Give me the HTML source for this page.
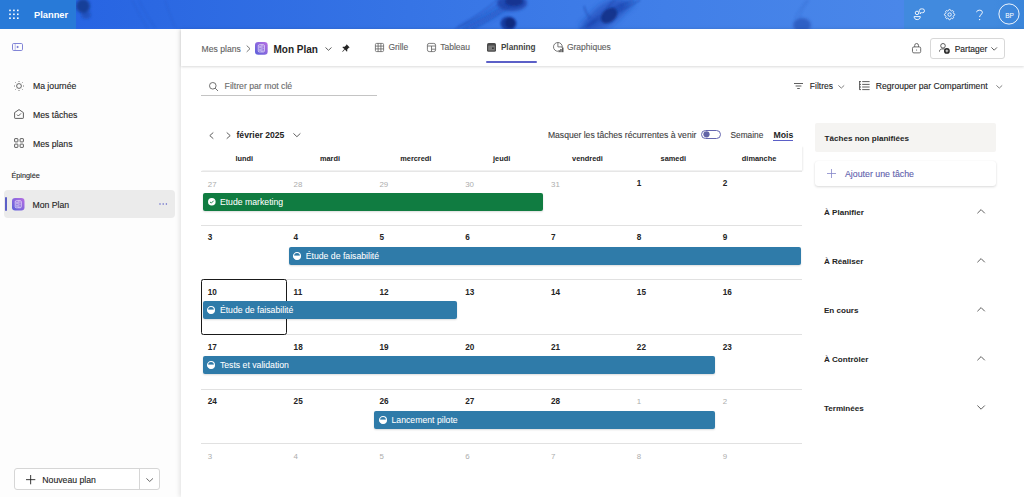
<!DOCTYPE html>
<html><head><meta charset="utf-8"><title>Planner</title>
<style>
html,body{margin:0;padding:0;width:1024px;height:497px;overflow:hidden;background:#fff;}
body{position:relative;font-family:"Liberation Sans", sans-serif;}
.t{position:absolute;white-space:nowrap;font-family:"Liberation Sans", sans-serif;}
svg{display:block}
</style></head><body>
<div style="position:absolute;left:0.00px;top:0.00px;width:1024.00px;height:29.00px;background:linear-gradient(90deg,#2461e4 0%,#2b68e2 15%,#3674e5 40%,#417fe8 65%,#4a87e9 88%,#4d89e6 100%)"></div>
<svg style="position:absolute;left:0.00px;top:0.00px;overflow:visible" width="1024" height="29" viewBox="0 0 1024 29">
<defs>
<filter id="b3" x="-100%" y="-100%" width="300%" height="300%"><feGaussianBlur stdDeviation="3"/></filter>
<filter id="b2" x="-100%" y="-100%" width="300%" height="300%"><feGaussianBlur stdDeviation="1.8"/></filter>
<filter id="b1" x="-100%" y="-100%" width="300%" height="300%"><feGaussianBlur stdDeviation="1"/></filter>
<filter id="b05" x="-100%" y="-100%" width="300%" height="300%"><feGaussianBlur stdDeviation="0.8"/></filter>
</defs>
<g filter="url(#b2)">
<ellipse cx="83" cy="6" rx="7" ry="7" fill="#10307f" opacity="0.75"/>
<ellipse cx="86" cy="15" rx="5" ry="4" fill="#163a95" opacity="0.45"/>
</g>
<g filter="url(#b05)" stroke="#2250b8" stroke-width="0.7" fill="none" opacity="0.45">
<path d="M132 0 C136 9 142 19 148 29"/><path d="M139 0 C143 10 150 20 156 29"/><path d="M165 0 C168 10 172 20 176 29"/>
</g>
<!-- jellyfish 1 -->
<g filter="url(#b3)"><path d="M507 4 C495 12 478 20 458 29 L470 29 C486 22 500 14 512 6Z" fill="#1b43aa" opacity="0.45"/></g>
<g filter="url(#b2)"><ellipse cx="512" cy="3" rx="15" ry="8" fill="#173ea3" opacity="0.75"/></g>
<g filter="url(#b1)"><ellipse cx="514" cy="1.5" rx="9" ry="4.5" fill="#0c2a82" opacity="0.7"/>
<ellipse cx="508.5" cy="23.5" rx="8" ry="7" fill="#123495" opacity="0.85"/>
<ellipse cx="510" cy="23" rx="5" ry="5" fill="#0a2270" opacity="0.7"/></g>
<g filter="url(#b05)" stroke="#1a3ea6" stroke-width="1" fill="none" opacity="0.6">
<path d="M502 2 C490 11 475 20 455 29"/><path d="M505 5 C494 13 480 21 463 29"/><path d="M509 6 C498 14 486 22 472 29"/><path d="M497 0 C488 8 474 18 458 27"/>
</g>
<!-- smoke 2 -->
<g filter="url(#b3)"><ellipse cx="606" cy="15" rx="24" ry="11" transform="rotate(-35 606 15)" fill="#1c45b0" opacity="0.6"/><ellipse cx="625" cy="6" rx="10" ry="5" transform="rotate(-30 625 6)" fill="#1c45b0" opacity="0.5"/><ellipse cx="588" cy="24" rx="9" ry="5" transform="rotate(-30 588 24)" fill="#1c45b0" opacity="0.45"/></g>
<g filter="url(#b1)"><ellipse cx="609" cy="15.5" rx="9.5" ry="6.5" transform="rotate(-40 609 15.5)" fill="#0d2a80" opacity="0.8"/></g>
<g filter="url(#b05)" stroke="#163ba2" stroke-width="1.1" fill="none" opacity="0.6">
<path d="M612 10 C620 6 626 3 634 0"/><path d="M616 12 C624 9 632 5 640 0"/><path d="M607 9 C609 5 612 2 615 0"/>
<path d="M603 18 C595 22 588 25 580 29"/><path d="M600 16 C594 20 590 24 586 29"/><path d="M584 6 C585 10 586 14 590 18"/>
</g>
<!-- 3 -->
<g filter="url(#b2)"><ellipse cx="802" cy="25" rx="9" ry="7" fill="#1c47ad" opacity="0.6"/></g>
<g filter="url(#b05)" stroke="#2452b8" stroke-width="0.7" fill="none" opacity="0.5">
<path d="M795 18 C798 12 802 6 807 0"/><path d="M799 18 C801 12 804 6 809 0"/>
</g>
</svg>
<div style="position:absolute;left:0.00px;top:0.00px;width:76.00px;height:29.00px;background:#287ad8"></div>
<div style="position:absolute;left:904.00px;top:0.00px;width:120.00px;height:29.00px;background:linear-gradient(90deg,#418ade 0%,#418ade 75%,#3a85da 100%)"></div>
<svg style="position:absolute;left:0.00px;top:0.00px;overflow:visible" width="30" height="29" viewBox="0 0 30 29"><rect x="9.2" y="9.6" width="1.6" height="1.6" fill="#fff"/><rect x="9.2" y="13.5" width="1.6" height="1.6" fill="#fff"/><rect x="9.2" y="17.4" width="1.6" height="1.6" fill="#fff"/><rect x="13.1" y="9.6" width="1.6" height="1.6" fill="#fff"/><rect x="13.1" y="13.5" width="1.6" height="1.6" fill="#fff"/><rect x="13.1" y="17.4" width="1.6" height="1.6" fill="#fff"/><rect x="17.0" y="9.6" width="1.6" height="1.6" fill="#fff"/><rect x="17.0" y="13.5" width="1.6" height="1.6" fill="#fff"/><rect x="17.0" y="17.4" width="1.6" height="1.6" fill="#fff"/></svg>
<div class="t" style="left:34.00px;top:9.80px;font-size:9.3px;line-height:11.16px;font-weight:700;color:#ffffff;">Planner</div>
<svg style="position:absolute;left:913.00px;top:8.00px;overflow:visible" width="12" height="12" viewBox="0 0 12 12"><g fill="none" stroke="#fff" stroke-width="0.9"><circle cx="4" cy="4.9" r="1.75"/><path d="M1.1 8.6 H7.3 C7.3 10.5 5.9 11.6 4.2 11.6 C2.5 11.6 1.1 10.5 1.1 8.6Z"/><path d="M8.2 0.9 H9.6 A1.9 1.9 0 0 1 9.6 4.7 H8.4 L7.1 5.8 L7.3 4.5 A1.9 1.9 0 0 1 8.2 0.9Z" stroke-linejoin="round"/></g></svg>
<svg style="position:absolute;left:943.80px;top:8.60px;overflow:visible" width="11.2" height="11.2" viewBox="0 0 11.2 11.2"><g fill="none" stroke="#fff" stroke-width="0.9"><path d="M10.74 5.60 L10.72 5.94 L10.62 6.26 L10.11 6.50 L9.59 6.67 L9.45 6.91 L9.35 7.15 L9.25 7.40 L9.18 7.67 L9.42 8.16 L9.62 8.68 L9.46 8.99 L9.24 9.24 L8.99 9.46 L8.68 9.62 L8.16 9.42 L7.67 9.18 L7.40 9.25 L7.15 9.35 L6.91 9.45 L6.67 9.59 L6.50 10.11 L6.26 10.62 L5.94 10.72 L5.60 10.74 L5.26 10.72 L4.94 10.62 L4.70 10.11 L4.53 9.59 L4.29 9.45 L4.05 9.35 L3.80 9.25 L3.53 9.18 L3.04 9.42 L2.52 9.62 L2.21 9.46 L1.96 9.24 L1.74 8.99 L1.58 8.68 L1.78 8.16 L2.02 7.67 L1.95 7.40 L1.85 7.15 L1.75 6.91 L1.61 6.67 L1.09 6.50 L0.58 6.26 L0.48 5.94 L0.46 5.60 L0.48 5.26 L0.58 4.94 L1.09 4.70 L1.61 4.53 L1.75 4.29 L1.85 4.05 L1.95 3.80 L2.02 3.53 L1.78 3.04 L1.58 2.52 L1.74 2.21 L1.96 1.96 L2.21 1.74 L2.52 1.58 L3.04 1.78 L3.53 2.02 L3.80 1.95 L4.05 1.85 L4.29 1.75 L4.53 1.61 L4.70 1.09 L4.94 0.58 L5.26 0.48 L5.60 0.46 L5.94 0.48 L6.26 0.58 L6.50 1.09 L6.67 1.61 L6.91 1.75 L7.15 1.85 L7.40 1.95 L7.67 2.02 L8.16 1.78 L8.68 1.58 L8.99 1.74 L9.24 1.96 L9.46 2.21 L9.62 2.52 L9.42 3.04 L9.18 3.53 L9.25 3.80 L9.35 4.05 L9.45 4.29 L9.59 4.53 L10.11 4.70 L10.62 4.94 L10.72 5.26 L10.74 5.60Z"/><circle cx="5.6" cy="5.6" r="1.7"/></g></svg>
<svg style="position:absolute;left:975.00px;top:8.60px;overflow:visible" width="9" height="12" viewBox="0 0 9 12"><g fill="none" stroke="#fff" stroke-width="0.95"><path d="M1.6 3.2 C1.6 0.6 7.4 0.4 7.4 3.4 C7.4 5.6 4.6 5.6 4.6 8"/></g><circle cx="4.6" cy="10.6" r="0.7" fill="#fff"/></svg>
<svg style="position:absolute;left:998.40px;top:3.40px;overflow:visible" width="22" height="22" viewBox="0 0 22 22"><circle cx="11" cy="11" r="10.1" fill="none" stroke="#fff" stroke-width="0.9"/></svg>
<div class="t" style="left:949.60px;width:120px;text-align:center;top:11.85px;font-size:6.6px;line-height:7.92px;font-weight:400;color:#ffffff;-webkit-text-stroke:0;">BP</div>
<div style="position:absolute;left:0.00px;top:29.00px;width:181.00px;height:468.00px;background:#fdfdfd"></div>
<svg style="position:absolute;left:12.00px;top:43.00px;overflow:visible" width="11" height="8" viewBox="0 0 11 8"><rect x="0.5" y="0.5" width="10" height="7" rx="1.2" fill="none" stroke="#7477d2" stroke-width="0.9"/><line x1="3.2" y1="1" x2="3.2" y2="7" stroke="#7477d2" stroke-width="0.8" opacity="0.6"/><path d="M5 2.8 L7.2 4 L5 5.2Z" fill="#7477d2"/><line x1="4" y1="4" x2="5.4" y2="4" stroke="#7477d2" stroke-width="0.7" opacity="0.6"/></svg>
<svg style="position:absolute;left:14.00px;top:80.50px;overflow:visible" width="10" height="10" viewBox="0 0 10 10"><g stroke="#424242" stroke-width="0.8" fill="none"><circle cx="5" cy="5" r="2.4"/><path d="M5 0.1v0.9M5 9v0.9M0.1 5h0.9M9 5h0.9M1.5 1.5l0.6 0.6M7.9 7.9l0.6 0.6M1.5 8.5l0.6-0.6M7.9 2.1l0.6-0.6"/></g></svg>
<div class="t" style="left:32.90px;top:80.87px;font-size:8.7px;line-height:10.44px;font-weight:400;color:#242424;-webkit-text-stroke:0.12px #242424;">Ma journée</div>
<svg style="position:absolute;left:14.00px;top:109.00px;overflow:visible" width="10" height="10" viewBox="0 0 10 10"><g stroke="#424242" stroke-width="0.85" fill="none" stroke-linejoin="round"><path d="M0.6 3.6 L5 0.6 L9.4 3.6 V8.8 Q9.4 9.4 8.8 9.4 H1.2 Q0.6 9.4 0.6 8.8Z"/><path d="M3 5.6 L4.4 7 L7 4.4"/></g></svg>
<div class="t" style="left:32.90px;top:109.57px;font-size:8.7px;line-height:10.44px;font-weight:400;color:#242424;-webkit-text-stroke:0.12px #242424;">Mes tâches</div>
<svg style="position:absolute;left:14.00px;top:138.00px;overflow:visible" width="10" height="10" viewBox="0 0 10 10"><g stroke="#424242" stroke-width="0.85" fill="none"><rect x="0.6" y="0.6" width="3.3" height="3.3" rx="0.5"/><rect x="6.1" y="0.6" width="3.3" height="3.3" rx="0.5"/><rect x="0.6" y="6.1" width="3.3" height="3.3" rx="0.5"/><rect x="6.1" y="6.1" width="3.3" height="3.3" rx="0.5"/></g></svg>
<div class="t" style="left:32.90px;top:138.57px;font-size:8.7px;line-height:10.44px;font-weight:400;color:#242424;-webkit-text-stroke:0.12px #242424;">Mes plans</div>
<div class="t" style="left:11.40px;top:171.89px;font-size:7.3px;line-height:8.76px;font-weight:400;color:#2a2a2a;-webkit-text-stroke:0.12px #2a2a2a;">Épinglée</div>
<div style="position:absolute;left:3.90px;top:190.20px;width:171.50px;height:27.40px;background:#ebebeb;border-radius:4px"></div>
<div style="position:absolute;left:4.90px;top:196.90px;width:2.10px;height:13.70px;background:#5b5fc7;border-radius:1px"></div>
<svg style="position:absolute;left:12.30px;top:197.80px;overflow:visible" width="12.5" height="12.5" viewBox="0 0 12.5 12.5"><defs><linearGradient id="pg12" x1="1" y1="0" x2="0" y2="1"><stop offset="0" stop-color="#b86fe2"/><stop offset="1" stop-color="#5a60da"/></linearGradient></defs>
<rect x="0" y="0" width="12.5" height="12.5" rx="3.2" fill="url(#pg12)"/>
<g transform="scale(1.0417)"><rect x="3.1" y="2.6" width="5.8" height="6.8" rx="1" fill="none" stroke="#fff" stroke-width="0.8" opacity="0.75"/>
<line x1="6.6" y1="2.6" x2="6.6" y2="9.4" stroke="#fff" stroke-width="0.7" opacity="0.75"/>
<rect x="3.9" y="3.6" width="2.1" height="2.2" fill="#fff" opacity="0.45"/><rect x="3.9" y="6.3" width="2.1" height="2.2" fill="#fff" opacity="0.45"/>
<circle cx="7.7" cy="4.6" r="0.45" fill="#fff" opacity="0.7"/><circle cx="7.7" cy="6.2" r="0.45" fill="#fff" opacity="0.7"/><circle cx="7.7" cy="7.8" r="0.45" fill="#fff" opacity="0.7"/></g></svg>
<div class="t" style="left:32.50px;top:199.57px;font-size:8.7px;line-height:10.44px;font-weight:400;color:#242424;-webkit-text-stroke:0.12px #242424;">Mon Plan</div>
<svg style="position:absolute;left:158.50px;top:203.00px;overflow:visible" width="9" height="2" viewBox="0 0 9 2"><circle cx="1" cy="1" r="0.75" fill="#5b5fc7"/><circle cx="4.2" cy="1" r="0.75" fill="#5b5fc7"/><circle cx="7.4" cy="1" r="0.75" fill="#5b5fc7"/></svg>
<div style="position:absolute;left:14.30px;top:468.40px;width:145.30px;height:21.80px;box-sizing:border-box;border:1px solid #d6d6d6;border-radius:3px;background:#fff"></div>
<div style="position:absolute;left:139.30px;top:468.90px;width:1.00px;height:20.80px;background:#d6d6d6"></div>
<svg style="position:absolute;left:26.00px;top:475.40px;overflow:visible" width="9.3" height="9.3" viewBox="0 0 9.3 9.3"><path d="M4.65 0 V9.3 M0 4.65 H9.3" stroke="#242424" stroke-width="0.9"/></svg>
<div class="t" style="left:42.30px;top:474.97px;font-size:8.7px;line-height:10.44px;font-weight:400;color:#242424;-webkit-text-stroke:0.12px #242424;">Nouveau plan</div>
<svg style="position:absolute;left:145.60px;top:477.50px;overflow:visible" width="7.4" height="4" viewBox="0 0 7.4 4"><path d="M0.4 0.4 L3.7 3.5 L7 0.4" fill="none" stroke="#424242" stroke-width="0.8"/></svg>
<div style="position:absolute;left:181.00px;top:29.00px;width:843.00px;height:468.00px;background:#ffffff;box-shadow:-2px 0 4px rgba(0,0,0,0.09)"></div>
<div style="position:absolute;left:181.00px;top:29.00px;width:843.00px;height:37.00px;background:#fff;box-shadow:0 1.2px 2.5px rgba(0,0,0,0.15)"></div>
<div class="t" style="left:201.60px;top:43.66px;font-size:8.6px;line-height:10.32px;font-weight:400;color:#616161;-webkit-text-stroke:0.12px #616161;">Mes plans</div>
<svg style="position:absolute;left:246.00px;top:44.60px;overflow:visible" width="5" height="7.5" viewBox="0 0 5 7.5"><path d="M0.7 0.6 L4 3.7 L0.7 6.9" fill="none" stroke="#616161" stroke-width="0.85"/></svg>
<svg style="position:absolute;left:255.20px;top:42.00px;overflow:visible" width="12.7" height="12.7" viewBox="0 0 12.7 12.7"><defs><linearGradient id="pg255" x1="1" y1="0" x2="0" y2="1"><stop offset="0" stop-color="#b86fe2"/><stop offset="1" stop-color="#5a60da"/></linearGradient></defs>
<rect x="0" y="0" width="12.7" height="12.7" rx="3.3" fill="url(#pg255)"/>
<g transform="scale(1.0583)"><rect x="3.1" y="2.6" width="5.8" height="6.8" rx="1" fill="none" stroke="#fff" stroke-width="0.8" opacity="0.75"/>
<line x1="6.6" y1="2.6" x2="6.6" y2="9.4" stroke="#fff" stroke-width="0.7" opacity="0.75"/>
<rect x="3.9" y="3.6" width="2.1" height="2.2" fill="#fff" opacity="0.45"/><rect x="3.9" y="6.3" width="2.1" height="2.2" fill="#fff" opacity="0.45"/>
<circle cx="7.7" cy="4.6" r="0.45" fill="#fff" opacity="0.7"/><circle cx="7.7" cy="6.2" r="0.45" fill="#fff" opacity="0.7"/><circle cx="7.7" cy="7.8" r="0.45" fill="#fff" opacity="0.7"/></g></svg>
<div class="t" style="left:273.50px;top:43.94px;font-size:10px;line-height:12.00px;font-weight:700;color:#242424;">Mon Plan</div>
<svg style="position:absolute;left:325.00px;top:46.80px;overflow:visible" width="7" height="4" viewBox="0 0 7 4"><path d="M0.5 0.5 L3.5 3.3 L6.5 0.5" fill="none" stroke="#424242" stroke-width="0.85"/></svg>
<svg style="position:absolute;left:341.70px;top:44.40px;overflow:visible" width="8" height="8.2" viewBox="0 0 8 8.2"><path d="M4.6 0.3 L7.7 3.4 L6.8 3.8 L5.2 5.4 L5.3 7.2 L4.6 7.5 L2.9 5.6 L0.6 7.9 L0.3 7.6 L2.4 5.1 L0.5 3.4 L0.8 2.7 L2.6 2.8 L4.2 1.2 Z" fill="#242424"/></svg>
<svg style="position:absolute;left:375.20px;top:42.70px;overflow:visible" width="9" height="9" viewBox="0 0 9 9"><g fill="none" stroke="#616161" stroke-width="0.8"><rect x="0.4" y="0.4" width="8.2" height="8.2" rx="1.2"/><path d="M3.1 0.4V8.6M5.9 0.4V8.6M0.4 3.1H8.6M0.4 5.9H8.6"/></g></svg>
<div class="t" style="left:388.40px;top:42.25px;font-size:8.5px;line-height:10.20px;font-weight:400;color:#616161;-webkit-text-stroke:0.12px #616161;">Grille</div>
<svg style="position:absolute;left:426.50px;top:42.70px;overflow:visible" width="9" height="9" viewBox="0 0 9 9"><g fill="none" stroke="#616161" stroke-width="0.8"><rect x="0.4" y="0.4" width="8.2" height="8.2" rx="1.8"/><path d="M0.4 3H8.6M4.5 3V8.6M4.5 6.2H8.6"/></g></svg>
<div class="t" style="left:440.20px;top:42.25px;font-size:8.5px;line-height:10.20px;font-weight:400;color:#616161;-webkit-text-stroke:0.12px #616161;">Tableau</div>
<svg style="position:absolute;left:487.40px;top:42.80px;overflow:visible" width="9" height="8.8" viewBox="0 0 9 8.8"><rect x="0" y="0" width="9" height="8.8" rx="1.6" fill="#4a4a4a"/><rect x="1.2" y="2.6" width="6.6" height="5" rx="0.5" fill="#7a7a7a"/><rect x="5" y="4.4" width="1.8" height="1.6" fill="#3a3a3a"/></svg>
<div class="t" style="left:500.90px;top:42.54px;font-size:8.2px;line-height:9.84px;font-weight:700;color:#424242;">Planning</div>
<div style="position:absolute;left:485.60px;top:60.90px;width:51.40px;height:2.00px;background:#5b5fc7;border-radius:1px"></div>
<svg style="position:absolute;left:553.00px;top:42.00px;overflow:visible" width="11" height="10.5" viewBox="0 0 11 10.5"><circle cx="4.9" cy="4.9" r="4.4" fill="none" stroke="#616161" stroke-width="0.85"/><path d="M4.9 0.5V4.9H9.3" fill="none" stroke="#616161" stroke-width="0.85"/><rect x="5" y="6" width="6" height="4.5" fill="#fff"/><rect x="5.4" y="8.2" width="1.5" height="2" fill="#5a5a5a"/><rect x="7.2" y="7" width="1.5" height="3.2" fill="#5a5a5a"/><rect x="9" y="5.6" width="1.5" height="4.6" fill="#5a5a5a"/></svg>
<div class="t" style="left:566.90px;top:42.25px;font-size:8.5px;line-height:10.20px;font-weight:400;color:#616161;-webkit-text-stroke:0.12px #616161;">Graphiques</div>
<svg style="position:absolute;left:912.10px;top:43.30px;overflow:visible" width="9.2" height="10.4" viewBox="0 0 9.2 10.4"><g fill="none" stroke="#4a4a4a" stroke-width="0.8"><path d="M2.7 3.9 V2.4 A1.9 1.9 0 0 1 6.5 2.4 V3.9"/><rect x="0.5" y="3.9" width="8.2" height="6" rx="1.4"/></g><circle cx="4.6" cy="7" r="0.55" fill="#4a4a4a"/></svg>
<div style="position:absolute;left:930.30px;top:38.20px;width:74.40px;height:20.60px;box-sizing:border-box;border:1px solid #d8d8d8;border-radius:3px;background:#fff"></div>
<svg style="position:absolute;left:938.50px;top:43.00px;overflow:visible" width="10.8" height="10.8" viewBox="0 0 10.8 10.8"><g fill="none" stroke="#424242" stroke-width="0.85"><circle cx="4" cy="2.8" r="2.3"/><path d="M0.5 8.6 C0.5 6.4 2 5.9 4 5.9 C5 5.9 5.6 6 6 6.2"/></g><circle cx="7.9" cy="7.9" r="2.9" fill="#242424"/><path d="M7.9 6.4V9.4M6.4 7.9H9.4" stroke="#fff" stroke-width="0.8"/></svg>
<div class="t" style="left:954.70px;top:43.75px;font-size:8.5px;line-height:10.20px;font-weight:400;color:#242424;-webkit-text-stroke:0.12px #242424;">Partager</div>
<svg style="position:absolute;left:990.80px;top:47.30px;overflow:visible" width="6.4" height="3.8" viewBox="0 0 6.4 3.8"><path d="M0.4 0.4 L3.2 3.2 L6 0.4" fill="none" stroke="#424242" stroke-width="0.85"/></svg>
<svg style="position:absolute;left:209.10px;top:81.70px;overflow:visible" width="9.4" height="9.4" viewBox="0 0 9.4 9.4"><g fill="none" stroke="#616161" stroke-width="0.9"><circle cx="3.8" cy="3.8" r="3.3"/><path d="M6.2 6.2 L9 9"/></g></svg>
<div class="t" style="left:224.60px;top:80.87px;font-size:8.7px;line-height:10.44px;font-weight:400;color:#6b6b6b;-webkit-text-stroke:0.12px #6b6b6b;">Filtrer par mot clé</div>
<div style="position:absolute;left:201.30px;top:94.60px;width:175.80px;height:1.00px;background:#c4c4c4"></div>
<svg style="position:absolute;left:793.80px;top:83.10px;overflow:visible" width="9" height="6" viewBox="0 0 9 6"><path d="M0 0.5H9M1.6 3H7.4M3.2 5.5H5.8" stroke="#424242" stroke-width="0.85"/></svg>
<div class="t" style="left:809.80px;top:80.95px;font-size:8.5px;line-height:10.20px;font-weight:400;color:#242424;-webkit-text-stroke:0.12px #242424;">Filtres</div>
<svg style="position:absolute;left:838.40px;top:85.00px;overflow:visible" width="6.6" height="3.6" viewBox="0 0 6.6 3.6"><path d="M0.4 0.4 L3.3 3.1 L6.2 0.4" fill="none" stroke="#616161" stroke-width="0.8"/></svg>
<svg style="position:absolute;left:858.60px;top:81.40px;overflow:visible" width="11" height="9" viewBox="0 0 11 9"><g stroke="#424242" stroke-width="0.85" fill="none"><path d="M3.2 0.6H10.6M3.2 3.4H10.6M3.2 6H10.6M3.2 8.6H10.6"/><path d="M0.6 0.4V8.8M0.6 3.4H2M0.6 6H2M0.6 8.6H2M0 0.6H2"/></g></svg>
<div class="t" style="left:875.80px;top:80.86px;font-size:8.6px;line-height:10.32px;font-weight:400;color:#242424;-webkit-text-stroke:0.12px #242424;">Regrouper par Compartiment</div>
<svg style="position:absolute;left:995.60px;top:85.00px;overflow:visible" width="6.6" height="3.6" viewBox="0 0 6.6 3.6"><path d="M0.4 0.4 L3.3 3.1 L6.2 0.4" fill="none" stroke="#616161" stroke-width="0.8"/></svg>
<svg style="position:absolute;left:209.30px;top:131.80px;overflow:visible" width="5" height="7.2" viewBox="0 0 5 7.2"><path d="M4.3 0.5 L0.8 3.6 L4.3 6.7" fill="none" stroke="#424242" stroke-width="0.85"/></svg>
<svg style="position:absolute;left:226.00px;top:131.80px;overflow:visible" width="5" height="7.2" viewBox="0 0 5 7.2"><path d="M0.7 0.5 L4.2 3.6 L0.7 6.7" fill="none" stroke="#424242" stroke-width="0.85"/></svg>
<div class="t" style="left:236.50px;top:129.96px;font-size:8.6px;line-height:10.32px;font-weight:700;color:#242424;">février 2025</div>
<svg style="position:absolute;left:293.00px;top:133.30px;overflow:visible" width="7.8" height="4.2" viewBox="0 0 7.8 4.2"><path d="M0.4 0.4 L3.9 3.7 L7.4 0.4" fill="none" stroke="#424242" stroke-width="0.85"/></svg>
<div class="t" style="left:547.90px;top:130.36px;font-size:8.6px;line-height:10.32px;font-weight:400;color:#424242;-webkit-text-stroke:0.12px #424242;">Masquer les tâches récurrentes à venir</div>
<div style="position:absolute;left:700.70px;top:130.00px;width:20.00px;height:9.40px;box-sizing:border-box;border:1px solid #6466b0;border-radius:5px;background:#fff"></div>
<svg style="position:absolute;left:703.20px;top:131.40px;overflow:visible" width="7" height="7" viewBox="0 0 7 7"><circle cx="3.5" cy="3.3" r="3.1" fill="#6264a7"/></svg>
<div class="t" style="left:730.50px;top:130.74px;font-size:8.3px;line-height:9.96px;font-weight:400;color:#424242;-webkit-text-stroke:0.12px #424242;">Semaine</div>
<div class="t" style="left:773.50px;top:129.77px;font-size:8.7px;line-height:10.44px;font-weight:700;color:#242424;">Mois</div>
<div style="position:absolute;left:773.20px;top:140.10px;width:19.90px;height:1.00px;background:#5b5fc7"></div>
<div style="position:absolute;left:201.30px;top:146.00px;width:600.70px;height:24.00px;background:#fff;box-shadow:1px 1px 1.5px rgba(0,0,0,0.08)"></div>
<div class="t" style="left:184.21px;width:120px;text-align:center;top:155.00px;font-size:7.4px;line-height:8.88px;font-weight:700;color:#242424;">lundi</div>
<div class="t" style="left:270.02px;width:120px;text-align:center;top:155.00px;font-size:7.4px;line-height:8.88px;font-weight:700;color:#242424;">mardi</div>
<div class="t" style="left:355.84px;width:120px;text-align:center;top:155.00px;font-size:7.4px;line-height:8.88px;font-weight:700;color:#242424;">mercredi</div>
<div class="t" style="left:441.65px;width:120px;text-align:center;top:155.00px;font-size:7.4px;line-height:8.88px;font-weight:700;color:#242424;">jeudi</div>
<div class="t" style="left:527.46px;width:120px;text-align:center;top:155.00px;font-size:7.4px;line-height:8.88px;font-weight:700;color:#242424;">vendredi</div>
<div class="t" style="left:613.28px;width:120px;text-align:center;top:155.00px;font-size:7.4px;line-height:8.88px;font-weight:700;color:#242424;">samedi</div>
<div class="t" style="left:699.09px;width:120px;text-align:center;top:155.00px;font-size:7.4px;line-height:8.88px;font-weight:700;color:#242424;">dimanche</div>
<div style="position:absolute;left:201.30px;top:170.60px;width:600.70px;height:1.20px;background:#e6e6e6"></div>
<div style="position:absolute;left:201.30px;top:224.50px;width:600.70px;height:1.00px;background:#e1e1e1"></div>
<div style="position:absolute;left:201.30px;top:279.00px;width:600.70px;height:1.00px;background:#e1e1e1"></div>
<div style="position:absolute;left:201.30px;top:334.00px;width:600.70px;height:1.00px;background:#e1e1e1"></div>
<div style="position:absolute;left:201.30px;top:388.50px;width:600.70px;height:1.00px;background:#e1e1e1"></div>
<div style="position:absolute;left:201.30px;top:443.00px;width:600.70px;height:1.00px;background:#e1e1e1"></div>
<div class="t" style="left:207.80px;top:179.52px;font-size:7.9px;line-height:9.48px;font-weight:400;color:#adadad;-webkit-text-stroke:0;">27</div>
<div class="t" style="left:293.61px;top:179.52px;font-size:7.9px;line-height:9.48px;font-weight:400;color:#adadad;-webkit-text-stroke:0;">28</div>
<div class="t" style="left:379.43px;top:179.52px;font-size:7.9px;line-height:9.48px;font-weight:400;color:#adadad;-webkit-text-stroke:0;">29</div>
<div class="t" style="left:465.24px;top:179.52px;font-size:7.9px;line-height:9.48px;font-weight:400;color:#adadad;-webkit-text-stroke:0;">30</div>
<div class="t" style="left:551.06px;top:179.52px;font-size:7.9px;line-height:9.48px;font-weight:400;color:#adadad;-webkit-text-stroke:0;">31</div>
<div class="t" style="left:636.87px;top:179.44px;font-size:8.2px;line-height:9.84px;font-weight:700;color:#242424;">1</div>
<div class="t" style="left:722.69px;top:179.44px;font-size:8.2px;line-height:9.84px;font-weight:700;color:#242424;">2</div>
<div class="t" style="left:207.80px;top:233.14px;font-size:8.2px;line-height:9.84px;font-weight:700;color:#242424;">3</div>
<div class="t" style="left:293.61px;top:233.14px;font-size:8.2px;line-height:9.84px;font-weight:700;color:#242424;">4</div>
<div class="t" style="left:379.43px;top:233.14px;font-size:8.2px;line-height:9.84px;font-weight:700;color:#242424;">5</div>
<div class="t" style="left:465.24px;top:233.14px;font-size:8.2px;line-height:9.84px;font-weight:700;color:#242424;">6</div>
<div class="t" style="left:551.06px;top:233.14px;font-size:8.2px;line-height:9.84px;font-weight:700;color:#242424;">7</div>
<div class="t" style="left:636.87px;top:233.14px;font-size:8.2px;line-height:9.84px;font-weight:700;color:#242424;">8</div>
<div class="t" style="left:722.69px;top:233.14px;font-size:8.2px;line-height:9.84px;font-weight:700;color:#242424;">9</div>
<div class="t" style="left:207.80px;top:287.64px;font-size:8.2px;line-height:9.84px;font-weight:700;color:#242424;">10</div>
<div class="t" style="left:293.61px;top:287.64px;font-size:8.2px;line-height:9.84px;font-weight:700;color:#242424;">11</div>
<div class="t" style="left:379.43px;top:287.64px;font-size:8.2px;line-height:9.84px;font-weight:700;color:#242424;">12</div>
<div class="t" style="left:465.24px;top:287.64px;font-size:8.2px;line-height:9.84px;font-weight:700;color:#242424;">13</div>
<div class="t" style="left:551.06px;top:287.64px;font-size:8.2px;line-height:9.84px;font-weight:700;color:#242424;">14</div>
<div class="t" style="left:636.87px;top:287.64px;font-size:8.2px;line-height:9.84px;font-weight:700;color:#242424;">15</div>
<div class="t" style="left:722.69px;top:287.64px;font-size:8.2px;line-height:9.84px;font-weight:700;color:#242424;">16</div>
<div class="t" style="left:207.80px;top:342.64px;font-size:8.2px;line-height:9.84px;font-weight:700;color:#242424;">17</div>
<div class="t" style="left:293.61px;top:342.64px;font-size:8.2px;line-height:9.84px;font-weight:700;color:#242424;">18</div>
<div class="t" style="left:379.43px;top:342.64px;font-size:8.2px;line-height:9.84px;font-weight:700;color:#242424;">19</div>
<div class="t" style="left:465.24px;top:342.64px;font-size:8.2px;line-height:9.84px;font-weight:700;color:#242424;">20</div>
<div class="t" style="left:551.06px;top:342.64px;font-size:8.2px;line-height:9.84px;font-weight:700;color:#242424;">21</div>
<div class="t" style="left:636.87px;top:342.64px;font-size:8.2px;line-height:9.84px;font-weight:700;color:#242424;">22</div>
<div class="t" style="left:722.69px;top:342.64px;font-size:8.2px;line-height:9.84px;font-weight:700;color:#242424;">23</div>
<div class="t" style="left:207.80px;top:397.14px;font-size:8.2px;line-height:9.84px;font-weight:700;color:#242424;">24</div>
<div class="t" style="left:293.61px;top:397.14px;font-size:8.2px;line-height:9.84px;font-weight:700;color:#242424;">25</div>
<div class="t" style="left:379.43px;top:397.14px;font-size:8.2px;line-height:9.84px;font-weight:700;color:#242424;">26</div>
<div class="t" style="left:465.24px;top:397.14px;font-size:8.2px;line-height:9.84px;font-weight:700;color:#242424;">27</div>
<div class="t" style="left:551.06px;top:397.14px;font-size:8.2px;line-height:9.84px;font-weight:700;color:#242424;">28</div>
<div class="t" style="left:636.87px;top:397.22px;font-size:7.9px;line-height:9.48px;font-weight:400;color:#adadad;-webkit-text-stroke:0;">1</div>
<div class="t" style="left:722.69px;top:397.22px;font-size:7.9px;line-height:9.48px;font-weight:400;color:#adadad;-webkit-text-stroke:0;">2</div>
<div class="t" style="left:207.80px;top:451.72px;font-size:7.9px;line-height:9.48px;font-weight:400;color:#adadad;-webkit-text-stroke:0;">3</div>
<div class="t" style="left:293.61px;top:451.72px;font-size:7.9px;line-height:9.48px;font-weight:400;color:#adadad;-webkit-text-stroke:0;">4</div>
<div class="t" style="left:379.43px;top:451.72px;font-size:7.9px;line-height:9.48px;font-weight:400;color:#adadad;-webkit-text-stroke:0;">5</div>
<div class="t" style="left:465.24px;top:451.72px;font-size:7.9px;line-height:9.48px;font-weight:400;color:#adadad;-webkit-text-stroke:0;">6</div>
<div class="t" style="left:551.06px;top:451.72px;font-size:7.9px;line-height:9.48px;font-weight:400;color:#adadad;-webkit-text-stroke:0;">7</div>
<div class="t" style="left:636.87px;top:451.72px;font-size:7.9px;line-height:9.48px;font-weight:400;color:#adadad;-webkit-text-stroke:0;">8</div>
<div class="t" style="left:722.69px;top:451.72px;font-size:7.9px;line-height:9.48px;font-weight:400;color:#adadad;-webkit-text-stroke:0;">9</div>
<div style="position:absolute;left:201.10px;top:279.00px;width:86.20px;height:56.20px;box-sizing:border-box;border:1.5px solid #1a1a1a;border-radius:2.5px"></div>
<div style="position:absolute;left:202.70px;top:192.80px;width:340.46px;height:18.20px;background:#107c41;border-radius:2px;box-shadow:0 1px 2px rgba(0,0,0,0.14)"></div>
<svg style="position:absolute;left:207.90px;top:198.10px;overflow:visible" width="7.6" height="7.6" viewBox="0 0 7.6 7.6"><circle cx="3.8" cy="3.8" r="3.8" fill="#fff"/><path d="M2 3.9 L3.3 5.1 L5.7 2.7" fill="none" stroke="#107c41" stroke-width="0.9"/></svg>
<div class="t" style="left:219.90px;top:197.27px;font-size:8.7px;line-height:10.44px;font-weight:400;color:#ffffff;-webkit-text-stroke:0.05px #fff;">Etude marketing</div>
<div style="position:absolute;left:288.51px;top:246.50px;width:512.09px;height:18.20px;background:#2f7ba9;border-radius:2px;box-shadow:0 1px 2px rgba(0,0,0,0.14)"></div>
<svg style="position:absolute;left:293.11px;top:251.60px;overflow:visible" width="8" height="8" viewBox="0 0 8 8"><circle cx="4" cy="4" r="3.45" fill="none" stroke="#fff" stroke-width="1.1"/><path d="M0.55 4 A3.45 3.45 0 0 0 7.45 4Z" fill="#fff"/><line x1="0.5" y1="4" x2="7.5" y2="4" stroke="#fff" stroke-width="0.8"/></svg>
<div class="t" style="left:305.71px;top:250.97px;font-size:8.7px;line-height:10.44px;font-weight:400;color:#ffffff;-webkit-text-stroke:0.05px #fff;">Étude de faisabilité</div>
<div style="position:absolute;left:202.70px;top:301.00px;width:254.64px;height:18.20px;background:#2f7ba9;border-radius:2px;box-shadow:0 1px 2px rgba(0,0,0,0.14)"></div>
<svg style="position:absolute;left:207.30px;top:306.10px;overflow:visible" width="8" height="8" viewBox="0 0 8 8"><circle cx="4" cy="4" r="3.45" fill="none" stroke="#fff" stroke-width="1.1"/><path d="M0.55 4 A3.45 3.45 0 0 0 7.45 4Z" fill="#fff"/><line x1="0.5" y1="4" x2="7.5" y2="4" stroke="#fff" stroke-width="0.8"/></svg>
<div class="t" style="left:219.90px;top:305.47px;font-size:8.7px;line-height:10.44px;font-weight:400;color:#ffffff;-webkit-text-stroke:0.05px #fff;">Étude de faisabilité</div>
<div style="position:absolute;left:202.70px;top:356.00px;width:512.09px;height:18.20px;background:#2f7ba9;border-radius:2px;box-shadow:0 1px 2px rgba(0,0,0,0.14)"></div>
<svg style="position:absolute;left:207.30px;top:361.10px;overflow:visible" width="8" height="8" viewBox="0 0 8 8"><circle cx="4" cy="4" r="3.45" fill="none" stroke="#fff" stroke-width="1.1"/><path d="M0.55 4 A3.45 3.45 0 0 0 7.45 4Z" fill="#fff"/><line x1="0.5" y1="4" x2="7.5" y2="4" stroke="#fff" stroke-width="0.8"/></svg>
<div class="t" style="left:219.90px;top:360.47px;font-size:8.7px;line-height:10.44px;font-weight:400;color:#ffffff;-webkit-text-stroke:0.05px #fff;">Tests et validation</div>
<div style="position:absolute;left:374.33px;top:410.50px;width:340.46px;height:18.20px;background:#2f7ba9;border-radius:2px;box-shadow:0 1px 2px rgba(0,0,0,0.14)"></div>
<svg style="position:absolute;left:378.93px;top:415.60px;overflow:visible" width="8" height="8" viewBox="0 0 8 8"><circle cx="4" cy="4" r="3.45" fill="none" stroke="#fff" stroke-width="1.1"/><path d="M0.55 4 A3.45 3.45 0 0 0 7.45 4Z" fill="#fff"/><line x1="0.5" y1="4" x2="7.5" y2="4" stroke="#fff" stroke-width="0.8"/></svg>
<div class="t" style="left:391.53px;top:414.97px;font-size:8.7px;line-height:10.44px;font-weight:400;color:#ffffff;-webkit-text-stroke:0.05px #fff;">Lancement pilote</div>
<div style="position:absolute;left:814.90px;top:123.40px;width:181.00px;height:28.40px;background:#f5f4f2;border-radius:2px"></div>
<div class="t" style="left:824.50px;top:134.03px;font-size:8.1px;line-height:9.72px;font-weight:700;color:#242424;">Tâches non planifiées</div>
<div style="position:absolute;left:814.90px;top:161.00px;width:181.00px;height:25.00px;background:#fff;border-radius:3px;box-shadow:0 1px 2.5px rgba(0,0,0,0.15),0 0 1px rgba(0,0,0,0.06)"></div>
<svg style="position:absolute;left:826.50px;top:169.30px;overflow:visible" width="9" height="9" viewBox="0 0 9 9"><path d="M4.5 0V9M0 4.5H9" stroke="#8587c9" stroke-width="0.8"/></svg>
<div class="t" style="left:845.00px;top:168.87px;font-size:8.8px;line-height:10.56px;font-weight:400;color:#5f62ad;-webkit-text-stroke:0.12px #5f62ad;">Ajouter une tâche</div>
<div class="t" style="left:823.90px;top:207.83px;font-size:8.1px;line-height:9.72px;font-weight:700;color:#242424;">À Planifier</div>
<svg style="position:absolute;left:976.60px;top:208.70px;overflow:visible" width="8.2" height="4.8" viewBox="0 0 8.2 4.8"><path d="M0.4 4.3 L4.1 0.6 L7.8 4.3" fill="none" stroke="#424242" stroke-width="0.85"/></svg>
<div class="t" style="left:823.90px;top:256.83px;font-size:8.1px;line-height:9.72px;font-weight:700;color:#242424;">À Réaliser</div>
<svg style="position:absolute;left:976.60px;top:257.70px;overflow:visible" width="8.2" height="4.8" viewBox="0 0 8.2 4.8"><path d="M0.4 4.3 L4.1 0.6 L7.8 4.3" fill="none" stroke="#424242" stroke-width="0.85"/></svg>
<div class="t" style="left:823.90px;top:305.83px;font-size:8.1px;line-height:9.72px;font-weight:700;color:#242424;">En cours</div>
<svg style="position:absolute;left:976.60px;top:306.70px;overflow:visible" width="8.2" height="4.8" viewBox="0 0 8.2 4.8"><path d="M0.4 4.3 L4.1 0.6 L7.8 4.3" fill="none" stroke="#424242" stroke-width="0.85"/></svg>
<div class="t" style="left:823.90px;top:354.83px;font-size:8.1px;line-height:9.72px;font-weight:700;color:#242424;">À Contrôler</div>
<svg style="position:absolute;left:976.60px;top:355.70px;overflow:visible" width="8.2" height="4.8" viewBox="0 0 8.2 4.8"><path d="M0.4 4.3 L4.1 0.6 L7.8 4.3" fill="none" stroke="#424242" stroke-width="0.85"/></svg>
<div class="t" style="left:823.90px;top:403.83px;font-size:8.1px;line-height:9.72px;font-weight:700;color:#242424;">Terminées</div>
<svg style="position:absolute;left:976.60px;top:405.30px;overflow:visible" width="8.2" height="4.8" viewBox="0 0 8.2 4.8"><path d="M0.4 0.5 L4.1 4.2 L7.8 0.5" fill="none" stroke="#424242" stroke-width="0.85"/></svg>
</body></html>
